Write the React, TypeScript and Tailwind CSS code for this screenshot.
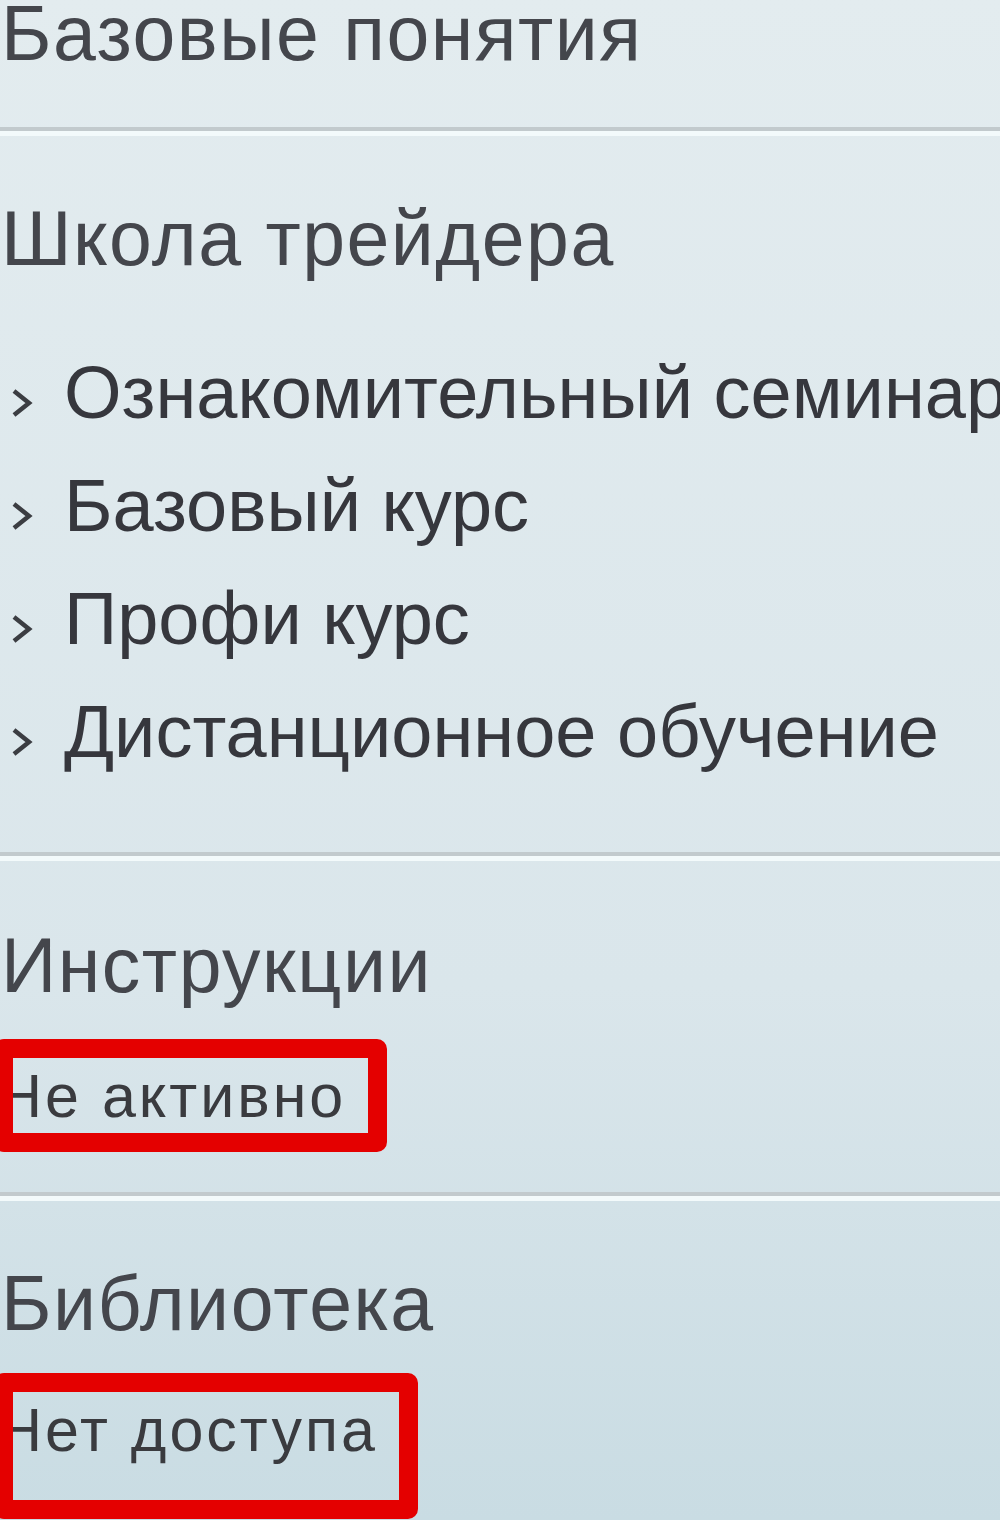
const font = { fontFamily: '"Liberation Sans", Arial, sans-serif' };

function Divider() {
  return (
    <div>
      <div className="h-[4px] bg-[#c2cacd]" />
      <div className="h-[5px] bg-[#f3fafb]" />
    </div>
  );
}

function Chevron() {
  return (
    <svg width="26" height="32" viewBox="0 0 26 32" className="inline-block align-baseline ml-[9px] mr-[29px]">
      <polyline points="5,5 20,17 5,29" fill="none" stroke="#3b3d42" strokeWidth="4.5" />
    </svg>
  );
}

function RedBox({ text, height, width }: { text: string; height: string; width: string }) {
  return (
    <div className={`relative -ml-[6px] ${width} ${height}`}>
      <div className="pl-[4px] pt-[27px] text-[61px] leading-none tracking-[3px] text-[#3a3b3f]">{text}</div>
      <div className="pointer-events-none absolute inset-0 rounded-[10px] border-[19px] border-[#e40000]" />
    </div>
  );
}

export default function App() {
  const items = ['Ознакомительный семинар', 'Базовый курс', 'Профи курс', 'Дистанционное обучение'];

  return (
    <div
      className="h-[1520px] w-[1000px] overflow-hidden bg-linear-to-b from-[#e3ecef] via-[#dae6eb] via-65% to-[#c9dce3]"
      style={font}
    >
      <h2 className="-mt-[5px] whitespace-nowrap pl-[1px] text-[77px] font-normal leading-none tracking-[1.5px] text-[#44464c]">
        Базовые понятия
      </h2>
      <div className="mt-[55px]">
        <Divider />
      </div>

      <h2 className="mt-[64px] whitespace-nowrap pl-[1px] text-[77px] font-normal leading-none tracking-[1.5px] text-[#44464c]">
        Школа трейдера
      </h2>
      <ul className="mt-[59px]">
        {items.map((item) => (
          <li key={item} className="whitespace-nowrap text-[74px] leading-[113px] text-[#36373d]">
            <Chevron />
            {item}
          </li>
        ))}
      </ul>
      <div className="mt-[64px]">
        <Divider />
      </div>

      <h2 className="mt-[66px] whitespace-nowrap pl-[1px] text-[77px] font-normal leading-none tracking-[1.5px] text-[#44464c]">
        Инструкции
      </h2>
      <div className="mt-[35px]">
        <RedBox text="Не активно" width="w-[393px]" height="h-[113px]" />
      </div>
      <div className="mt-[40px]">
        <Divider />
      </div>

      <h2 className="mt-[64px] whitespace-nowrap pl-[1px] text-[77px] font-normal leading-none tracking-[1.5px] text-[#44464c]">
        Библиотека
      </h2>
      <div className="mt-[31px]">
        <RedBox text="Нет доступа" width="w-[424px]" height="h-[146px]" />
      </div>
    </div>
  );
}
